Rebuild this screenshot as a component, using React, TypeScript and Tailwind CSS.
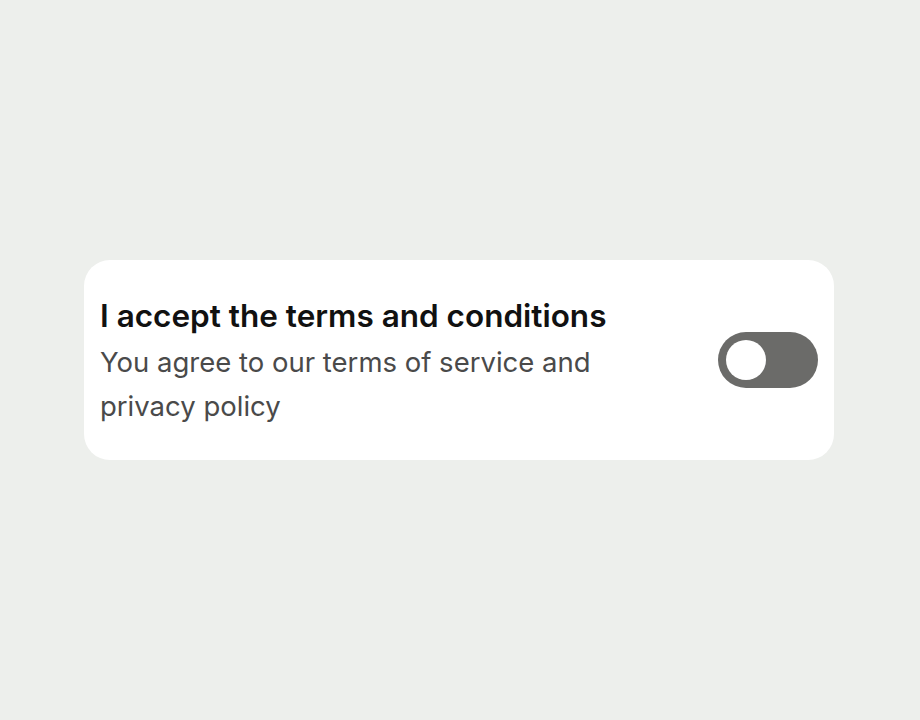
import React, { useState } from "react";

export default function App() {
  const [on, setOn] = useState(false);
  return (
    <div
      className="w-[920px] h-[720px] bg-[#edefec] flex items-center"
      style={{ fontFamily: "Inter, 'Noto Sans', sans-serif" }}
    >
      <div className="ml-[84px] w-[750px] bg-white rounded-[26px] px-4 pt-[34px] pb-[32px] flex items-center justify-between">
        <div className="w-[560px] flex flex-col">
          <div className="text-[31.5px] leading-[44px] font-semibold text-[#111111]">
            I accept the terms and conditions
          </div>
          <div className="mt-[2px] text-[27.5px] leading-[44px] text-[#4a4a4a]">
            You agree to our terms of service and privacy policy
          </div>
        </div>
        <button
          onClick={() => setOn(!on)}
          className="mb-[2px] w-[100px] h-[56px] rounded-full bg-[#6b6b69] p-2 flex items-center"
        >
          <span className="w-10 h-10 rounded-full bg-white block" />
        </button>
      </div>
    </div>
  );
}
